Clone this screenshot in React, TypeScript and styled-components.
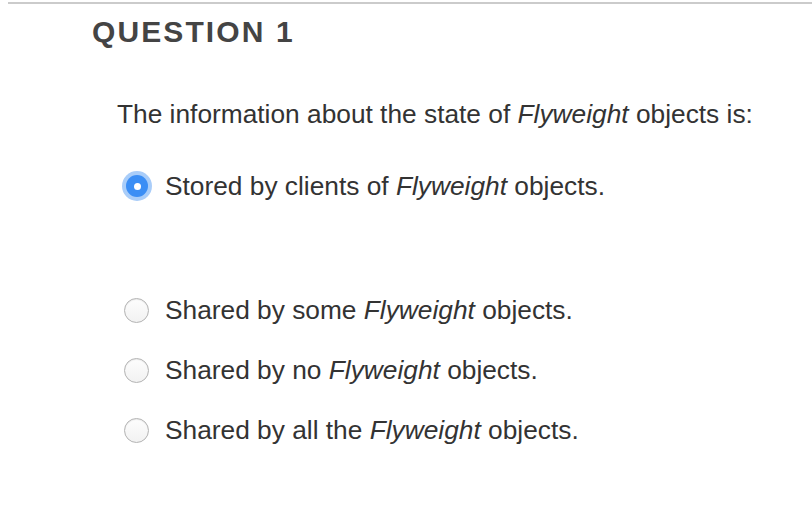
import React, {useState} from "react";
import styled, {createGlobalStyle} from "styled-components";

const GlobalStyle = createGlobalStyle`
  html, body {
    margin: 0;
    padding: 0;
    background: #fff;
  }
  body {
    font-family: "Liberation Sans", Arial, sans-serif;
    color: #333;
  }
`;

const Page = styled.div`
  width: 812px;
  height: 508px;
  overflow: hidden;
  padding-left: 8px;
  box-sizing: border-box;
`;

const Panel = styled.div`
  border-top: 2px solid #cbcbcb;
  margin-top: 2px;
`;

const Heading = styled.h2`
  margin: 12px 0 0 84px;
  font-size: 30px;
  font-weight: bold;
  letter-spacing: 2.1px;
  color: #444;
  line-height: 32px;
`;

const Body = styled.div`
  padding: 52px 0 0 109px;
`;

const Prompt = styled.p`
  margin: 0;
  font-size: 26.3px;
  line-height: 28px;
  color: #333;
`;

const Options = styled.div`
  display: flex;
  flex-direction: column;
  margin-top: 43px;
`;

const Option = styled.label<{ $spacer?: boolean }>`
  display: flex;
  align-items: center;
  height: 30px;
  margin-bottom: ${p => (p.$spacer ? "94px" : "30px")};
  font-size: 26.3px;
  color: #333;
  cursor: pointer;
`;

const RadioDot = styled.span<{ $checked: boolean }>`
  flex: none;
  box-sizing: border-box;
  display: flex;
  align-items: center;
  justify-content: center;
  width: ${p => (p.$checked ? "22px" : "25px")};
  height: ${p => (p.$checked ? "22px" : "25px")};
  margin: ${p => (p.$checked ? "0 17px 0 9px" : "0 16px 0 7px")};
  border-radius: 50%;
  background: ${p => (p.$checked ? "#3b8ef5" : "linear-gradient(#fdfdfd, #f2f2f2)")};
  border: ${p => (p.$checked ? "none" : "1px solid #b3b3b3")};
  box-shadow: ${p => (p.$checked ? "0 0 0 4px #a9cdf9" : "inset 0 1px 1px rgba(0,0,0,0.08)")};
  &::after {
    content: "";
    display: ${p => (p.$checked ? "block" : "none")};
    width: 7px;
    height: 7px;
    border-radius: 50%;
    background: #fff;
  }
`;

const Text = styled.span`
  line-height: 30px;
`;

const choices = [
  {pre: "Stored by clients of ", post: " objects."},
  {pre: "Shared by some ", post: " objects."},
  {pre: "Shared by no ", post: " objects."},
  {pre: "Shared by all the ", post: " objects."},
];

export default function App() {
  const [selected, setSelected] = useState(0);

  return (
    <Page>
      <GlobalStyle/>
      <Panel>
        <Heading>QUESTION 1</Heading>
        <Body>
          <Prompt>The information about the state of <i>Flyweight</i> objects is:</Prompt>
          <Options>
            {choices.map((c, i) => (
              <Option key={i} $spacer={i === 0} onClick={() => setSelected(i)}>
                <RadioDot $checked={selected === i}/>
                <Text>{c.pre}<i>Flyweight</i>{c.post}</Text>
              </Option>
            ))}
          </Options>
        </Body>
      </Panel>
    </Page>
  );
}
